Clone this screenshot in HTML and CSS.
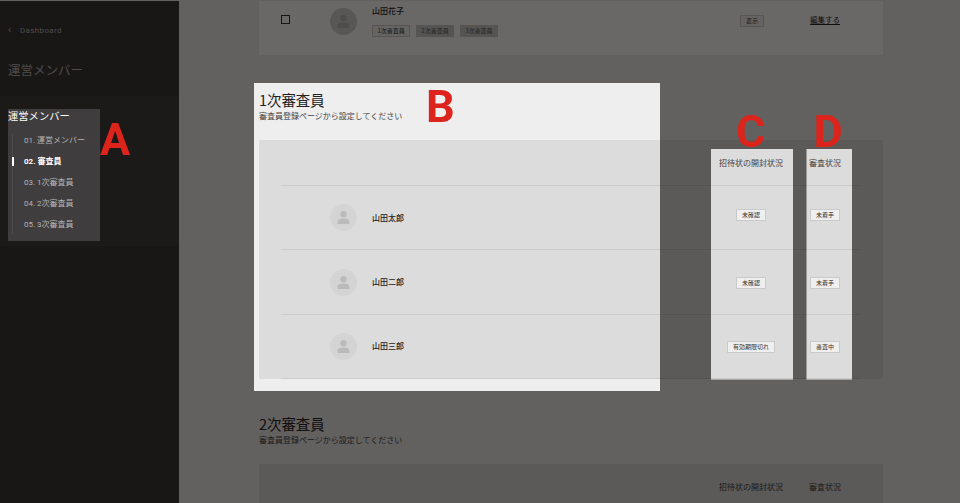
FILE: index.html
```html
<!DOCTYPE html>
<html lang="ja">
<head>
<meta charset="utf-8">
<title>運営メンバー</title>
<link rel="stylesheet" href="styles.css">
</head>
<body>
<div class="page">
  <aside class="sidebar">
    <a class="back"><span class="back-arrow">‹</span>Dashboard</a>
    <h1 class="side-title">運営メンバー</h1>
    <nav class="side-nav">
      <h2 class="nav-title">運営メンバー</h2>
      <ul class="nav-list">
        <li class="nav-item">01. 運営メンバー</li>
        <li class="nav-item is-active">02. 審査員</li>
        <li class="nav-item">03. 1次審査員</li>
        <li class="nav-item">04. 2次審査員</li>
        <li class="nav-item">05. 3次審査員</li>
      </ul>
    </nav>
  </aside>
  <main class="main">
    <div class="card">
      <span class="checkbox"></span>
      <span class="avatar card-avatar"><svg viewBox="0 0 27 27"><circle cx="13.5" cy="10.2" r="3.2"/><path d="M7.5 20v-2.2c0-2.2 2.7-3.4 6-3.4s6 1.2 6 3.4V20z"/></svg></span>
      <div class="card-person">
        <div class="card-name">山田花子</div>
        <div class="card-tags">
          <span class="role">1次審査員</span>
          <span class="role is-off">2次審査員</span>
          <span class="role is-off">3次審査員</span>
        </div>
      </div>
      <span class="role card-show">表示</span>
      <a class="card-edit">編集する</a>
    </div>

    <section class="section">
      <h2 class="section-title">1次審査員</h2>
      <p class="section-sub">審査員登録ページから設定してください</p>
      <div class="table">
        <div class="row row-head"><span></span><span></span><span class="col-title">招待状の開封状況</span><span class="col-title">審査状況</span></div>
        <div class="row row-first">
          <span class="avatar"><svg viewBox="0 0 27 27"><circle cx="13.5" cy="10.2" r="3.2"/><path d="M7.5 20v-2.2c0-2.2 2.7-3.4 6-3.4s6 1.2 6 3.4V20z"/></svg></span>
          <span class="name">山田太郎</span>
          <span class="cell"><span class="tag">未確認</span></span>
          <span class="cell"><span class="tag">未着手</span></span>
        </div>
        <div class="row">
          <span class="avatar"><svg viewBox="0 0 27 27"><circle cx="13.5" cy="10.2" r="3.2"/><path d="M7.5 20v-2.2c0-2.2 2.7-3.4 6-3.4s6 1.2 6 3.4V20z"/></svg></span>
          <span class="name">山田二郎</span>
          <span class="cell"><span class="tag">未確認</span></span>
          <span class="cell"><span class="tag">未着手</span></span>
        </div>
        <div class="row">
          <span class="avatar"><svg viewBox="0 0 27 27"><circle cx="13.5" cy="10.2" r="3.2"/><path d="M7.5 20v-2.2c0-2.2 2.7-3.4 6-3.4s6 1.2 6 3.4V20z"/></svg></span>
          <span class="name">山田三郎</span>
          <span class="cell"><span class="tag">有効期限切れ</span></span>
          <span class="cell"><span class="tag">審査中</span></span>
        </div>
      </div>
    </section>

    <section class="section section-next">
      <h2 class="section-title">2次審査員</h2>
      <p class="section-sub">審査員登録ページから設定してください</p>
      <div class="table">
        <div class="row row-head"><span></span><span></span><span class="col-title">招待状の開封状況</span><span class="col-title">審査状況</span></div>
      </div>
    </section>
  </main>
</div>

<div class="dim"></div>
<span class="mark mark-a">A</span>
<span class="mark mark-b">B</span>
<span class="mark mark-c">C</span>
<span class="mark mark-d">D</span>
</body>
</html>
```

FILE: styles.css
```css
* { box-sizing: border-box; }
html, body { margin: 0; height: 100%; }
body {
  overflow: hidden;
  padding-top: 1px;
  background: #eeeeee;
  color: #222;
  font-family: "Noto Sans CJK JP", "Noto Sans", sans-serif;
}
.page { display: flex; height: 502px; overflow: hidden; }

/* sidebar */
.sidebar {
  flex: 0 0 179px;
  background: #373435;
  color: #b8b6b6;
  padding-top: 24px;
}
.back {
  display: flex;
  align-items: center;
  height: 12px;
  padding-left: 8px;
  font: 8px/12px Roboto, sans-serif;
  letter-spacing: .35px;
}
.back-arrow { width: 12px; font-size: 11px; line-height: 10px; margin-top: -3px; }
.side-title {
  margin: 23px 0 0 8px;
  font-size: 12.5px;
  line-height: 20px;
  font-weight: 400;
}
.side-nav {
  margin-top: 16px;
  height: 150px;
  padding: 12px 0 0 8px;
  background: #3f3d3e;
}
.nav-title {
  margin: 0;
  color: #fff;
  font-size: 10.3px;
  line-height: 16px;
  font-weight: 400;
}
.nav-list {
  position: relative;
  list-style: none;
  margin: 6px 0 0 4px;
  padding: 0;
  width: 84px;
}
.nav-list::before {
  content: "";
  position: absolute;
  left: 0;
  top: 4px;
  bottom: 1px;
  width: 1px;
  background: #4c4c4c;
}
.nav-item {
  position: relative;
  height: 21px;
  padding-left: 12px;
  font: 8px/21px Roboto, "Noto Sans CJK JP", sans-serif;
  color: #b4b4b4;
  white-space: nowrap;
}
.nav-item.is-active { color: #fff; font-weight: 700; }
.nav-item.is-active::before {
  content: "";
  position: absolute;
  left: 0;
  top: 6px;
  width: 2px;
  height: 9px;
  background: #fff;
}

/* main */
.main { flex: 1; padding: 0 77px 0 80px; min-width: 0; }
.card {
  position: relative;
  display: flex;
  align-items: flex-start;
  height: 54px;
  background: #ffffff;
}
.checkbox {
  flex: none;
  width: 9px;
  height: 9px;
  margin: 14px 0 0 22px;
  border: 1px solid #333;
}
.card-avatar { margin: 7px 0 0 39.5px; }
.card-person { margin-left: 15.5px; padding-top: 4px; width: 368px; }
.card-name { font-size: 8px; line-height: 12px; font-weight: 500; color: #222; }
.card-tags { display: flex; gap: 5.5px; margin-top: 8px; }
.role {
  flex: none;
  padding: 0 4.5px;
  height: 12px;
  border: 1px solid #cfcfcf;
  font-size: 6px;
  line-height: 10px;
  color: #333;
  background: #f4f4f4;
}
.role.is-off { background: #cccccc; border-color: #cccccc; color: #555; }
.card-show { margin-top: 14px; padding: 0 5px; }
.card-edit {
  margin: 13px 0 0 46px;
  font-size: 7.5px;
  line-height: 12px;
  color: #222;
  text-decoration: underline;
}

/* sections */
.section { margin-top: 35px; }
.section-next { margin-top: 35px; }
.section-title {
  margin: 0;
  font-size: 14.4px;
  line-height: 20px;
  font-weight: 400;
  color: #222;
}
.section-sub { margin: 0; font-size: 8px; line-height: 12px; color: #444; }
.table { margin-top: 18px; height: 239px; overflow: hidden; background: #dcdcdc; padding: 0 22px; }
.row {
  display: grid;
  grid-template-columns: 91px 324px 110px 38px 17px;
  align-items: center;
  height: 64.4px;
  border-bottom: 1px solid #cbcbcb;
}
.row-head { height: 46px; align-items: start; padding-top: 17px; }
.col-title {
  font-size: 8px;
  line-height: 12px;
  color: #444;
  text-align: center;
  white-space: nowrap;
  justify-self: center;
}
.avatar {
  display: block;
  width: 27px;
  height: 27px;
  border-radius: 50%;
  background: #d4d4d4;
  flex: none;
}
.row .avatar { margin-left: 48.5px; }
.avatar svg { display: block; width: 27px; height: 27px; fill: #bbbbbb; }
.name { font-size: 8px; line-height: 12px; font-weight: 500; color: #222; }
.cell { display: flex; justify-content: center; padding-top: 2px; }
.row-first .cell { padding-top: 0; padding-bottom: 6px; }
.tag {
  flex: none;
  height: 12px;
  padding: 0 5px;
  background: #efefef;
  border: 1px solid #cacaca;
  font-size: 6px;
  line-height: 10px;
  color: #333;
  white-space: nowrap;
}

/* annotation layer */
.dim {
  position: fixed;
  inset: 0;
  background: rgba(5, 3, 2, .6);
  clip-path: path(evenodd, "M0 0H960V503H0Z M8 109H100V241H8Z M254 83H660V391H254Z M711 149H793V379.5H711Z M806.5 149H852V379.5H806.5Z");
}
.mark {
  position: fixed;
  font: 700 45px/33px Roboto, sans-serif;
  color: #dc241c;
}
.mark-a { left: 100px; top: 123px; }
.mark-b { left: 426px; top: 90px; }
.mark-c { left: 736px; top: 115px; }
.mark-d { left: 813.5px; top: 115px; }
```
